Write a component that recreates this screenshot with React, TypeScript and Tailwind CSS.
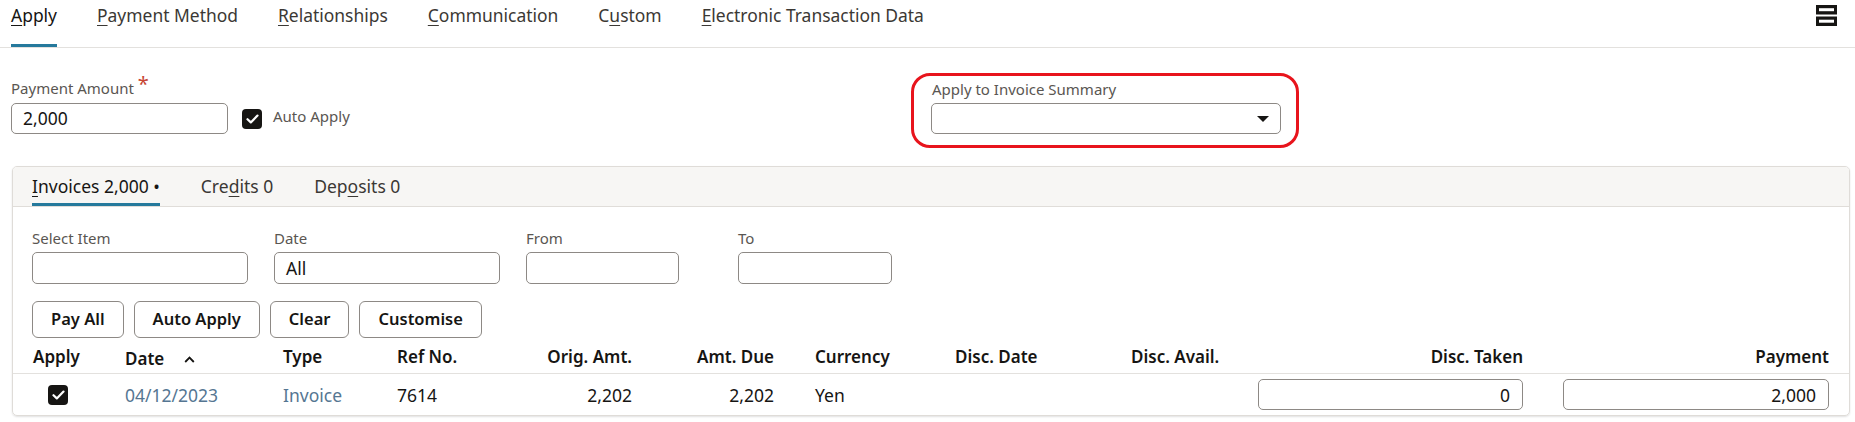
import React from "react"

type Mn = { pre: string; u: string; post: string }

const topTabs: Mn[] = [
  { pre: "", u: "A", post: "pply" },
  { pre: "", u: "P", post: "ayment Method" },
  { pre: "", u: "R", post: "elationships" },
  { pre: "", u: "C", post: "ommunication" },
  { pre: "C", u: "u", post: "stom" },
  { pre: "", u: "E", post: "lectronic Transaction Data" },
]

const cardTabs: Mn[] = [
  { pre: "", u: "I", post: "nvoices 2,000 \u2022" },
  { pre: "Cre", u: "d", post: "its 0" },
  { pre: "Dep", u: "o", post: "sits 0" },
]

function Label({ t }: { t: Mn }) {
  return (
    <>
      {t.pre}
      <span className="underline decoration-1 underline-offset-[3px]">{t.u}</span>
      {t.post}
    </>
  )
}

function Check({ className = "" }: { className?: string }) {
  return (
    <div className={"flex h-[20px] w-[20px] items-center justify-center rounded-[4px] bg-[#161513] " + className}>
      <svg width="13" height="10" viewBox="0 0 13 10" fill="none">
        <path d="M1.5 5.2 4.8 8.4 11.5 1.6" stroke="white" strokeWidth="2.2" strokeLinecap="round" strokeLinejoin="round" />
      </svg>
    </div>
  )
}

function Field({ label, value, w, className = "" }: { label: string; value?: string; w: string; className?: string }) {
  return (
    <div className={className}>
      <div className="mb-[4px] h-[20px] text-[15px] leading-[20px] text-[#5a5652]">{label}</div>
      <div className={w + " flex h-[32px] items-center rounded-[5px] border border-[#8d8985] px-[11px] text-[17.5px]"}>{value}</div>
    </div>
  )
}

const cols = "grid grid-cols-[112px_158px_114px_103px_132px_142px_181px_176px_127px_265px_40px_266px]"

export default function App() {
  return (
    <div className="h-[422px] w-[1855px] overflow-hidden bg-white font-['Noto_Sans',sans-serif] text-[#161513]">
      {/* top tabs */}
      <div className="flex h-[48px] border-b border-[#e3e1de] pl-[11px] pr-[18px]">
        <div className="flex gap-[40px]">
          {topTabs.map((t, i) => (
            <div key={i} className={"relative h-[47px] pt-[3px] text-[17.45px] leading-[24px] " + (i === 0 ? "text-[#161513]" : "text-[#3b3834]")}>
              <Label t={t} />
              {i === 0 && <div className="absolute bottom-0 left-0 right-0 h-[3px] bg-[#25799c]" />}
            </div>
          ))}
        </div>
        <div className="ml-auto mt-[5px]">
          <svg width="21" height="21" viewBox="0 0 21 21">
            <rect x="0" y="0" width="21" height="9.5" fill="#161513" />
            <rect x="3" y="3.2" width="15" height="3" fill="white" />
            <rect x="0" y="11.5" width="21" height="9.5" fill="#161513" />
            <rect x="3" y="14.7" width="15" height="3" fill="white" />
          </svg>
        </div>
      </div>

      {/* form row */}
      <div className="flex items-start pl-[11px] pt-[25px]">
        <div className="w-[900px] pt-[5px]">
          <div className="flex h-[20px] text-[15px] leading-[20px] text-[#5a5652]">
            Payment Amount
            <span className="relative -top-[4px] ml-[4px] text-[20px] leading-[20px] text-[#c74634]">*</span>
          </div>
          <div className="mt-[5px] flex items-center">
            <div className="flex h-[31px] w-[217px] items-center rounded-[5px] border border-[#8d8985] px-[11px] text-[17.5px]">2,000</div>
            <Check className="ml-[14px]" />
            <span className="-mt-[4px] ml-[11px] text-[15px] text-[#5a5652]">Auto Apply</span>
          </div>
        </div>
        <div className="w-[388px] rounded-[19px] border-[3px] border-[#e8141c] pb-[11px] pl-[17px] pr-[15px] pt-[3px]">
          <div className="h-[20px] pl-[1px] text-[15px] leading-[20px] text-[#5a5652]">Apply to Invoice Summary</div>
          <div className="mt-[4px] flex h-[31px] items-center justify-end rounded-[5px] border border-[#8d8985] pr-[11px]">
            <svg width="12" height="6" viewBox="0 0 12 6">
              <path d="M0 0h12L6 6z" fill="#161513" />
            </svg>
          </div>
        </div>
      </div>

      {/* card */}
      <div className="ml-[12px] mt-[18px] w-[1838px] overflow-hidden rounded-[5px] border border-[#dfdcd8] shadow-[0_1px_2px_rgba(0,0,0,0.12)]">
        <div className="flex h-[40px] gap-[41px] border-b border-[#e0ddd9] bg-[#f7f6f4] pl-[19px]">
          {cardTabs.map((t, i) => (
            <div key={i} className={"relative h-full pt-[7px] text-[17.5px] leading-[24px] " + (i === 0 ? "text-[#161513]" : "text-[#3b3834]")}>
              <Label t={t} />
              {i === 0 && <div className="absolute bottom-0 left-0 right-0 h-[3px] bg-[#25799c]" />}
            </div>
          ))}
        </div>

        <div className="flex items-start pl-[19px] pt-[21px]">
          <Field label="Select Item" w="w-[216px]" />
          <Field label="Date" value="All" w="w-[226px]" className="ml-[26px]" />
          <Field label="From" w="w-[153px]" className="ml-[26px]" />
          <Field label="To" w="w-[154px]" className="ml-[59px]" />
        </div>

        <div className="mt-[17px] flex gap-[10px] pl-[19px]">
          {["Pay All", "Auto Apply", "Clear", "Customise"].map((b) => (
            <button key={b} className="h-[37px] rounded-[6px] border border-[#8d8985] bg-white px-[18px] text-[16.5px] font-semibold text-[#161513]">
              {b}
            </button>
          ))}
        </div>

        <div className={cols + " h-[36px] border-b border-[#e3e1de] pt-[7px] text-[17px] font-semibold leading-[24px]"}>
          <div className="pl-[20px]">Apply</div>
          <div className="flex items-center">
            Date
            <svg className="ml-[20px]" width="11" height="7" viewBox="0 0 11 7" fill="none">
              <path d="M1.2 6 5.5 1.6 9.8 6" stroke="#161513" strokeWidth="1.8" />
            </svg>
          </div>
          <div>Type</div>
          <div>Ref No.</div>
          <div className="text-right">Orig. Amt.</div>
          <div className="text-right">Amt. Due</div>
          <div className="pl-[41px]">Currency</div>
          <div>Disc. Date</div>
          <div>Disc. Avail.</div>
          <div className="text-right">Disc. Taken</div>
          <div />
          <div className="text-right">Payment</div>
        </div>

        <div className={cols + " h-[41px] items-center text-[17.5px] leading-[24px]"}>
          <div className="pl-[35px]">
            <Check />
          </div>
          <div className="text-[#557692]">04/12/2023</div>
          <div className="text-[#557692]">Invoice</div>
          <div>7614</div>
          <div className="text-right">2,202</div>
          <div className="text-right">2,202</div>
          <div className="pl-[41px]">Yen</div>
          <div />
          <div />
          <div className="flex h-[31px] items-center justify-end rounded-[5px] border border-[#8d8985] pr-[12px]">0</div>
          <div />
          <div className="flex h-[31px] items-center justify-end rounded-[5px] border border-[#8d8985] pr-[12px]">2,000</div>
        </div>
      </div>
    </div>
  )
}
